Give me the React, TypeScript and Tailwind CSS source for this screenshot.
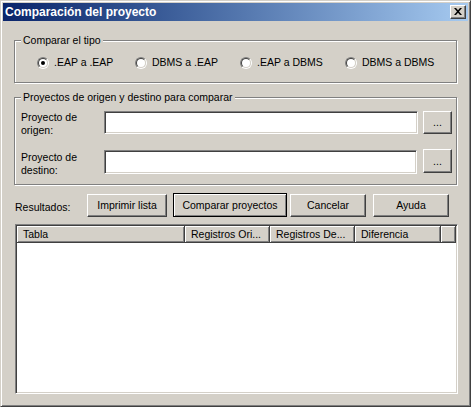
import React from "react";

function Radio({ checked }: { checked?: boolean }) {
  return (
    <span className="w-[12px] h-[12px] rounded-full border border-t-[#808080] border-l-[#808080] border-b-white border-r-white flex items-center justify-center shrink-0">
      <span className="w-[10px] h-[10px] rounded-full border border-t-[#404040] border-l-[#404040] border-b-[#d4d0c8] border-r-[#d4d0c8] bg-white flex items-center justify-center">
        {checked && <span className="w-[4px] h-[4px] rounded-full bg-black" />}
      </span>
    </span>
  );
}

function Btn({ children, className }: { children: React.ReactNode; className: string }) {
  return (
    <div
      className={
        "flex items-center justify-center bg-[#d4d0c8] border border-t-white border-l-white border-r-[#404040] border-b-[#404040] shadow-[inset_-1px_-1px_0_#808080] " +
        className
      }
    >
      {children}
    </div>
  );
}

function Field({ className }: { className: string }) {
  return (
    <div
      className={
        "bg-white border border-t-[#808080] border-l-[#808080] border-b-white border-r-white shadow-[inset_1px_1px_0_#404040,inset_-1px_-1px_0_#d4d0c8] " +
        className
      }
    />
  );
}

function HeaderCell({ children, className }: { children?: React.ReactNode; className: string }) {
  return (
    <div
      className={
        "h-full flex items-center pl-[6px] whitespace-nowrap overflow-hidden border-r border-b border-[#404040] shadow-[inset_1px_1px_0_#fff,inset_-1px_-1px_0_#808080] " +
        className
      }
    >
      {children}
    </div>
  );
}

export default function App() {
  return (
    <div className="w-[471px] h-[407px] bg-[#d4d0c8] border border-t-[#d4d0c8] border-l-[#d4d0c8] border-r-[#404040] border-b-[#404040] shadow-[inset_1px_1px_0_#fff,inset_-1px_-1px_0_#808080] p-[2px] flex flex-col text-[10.5px] leading-[13px] text-black font-['Liberation_Sans',Arial,sans-serif]">
      {/* Title bar */}
      <div className="h-[18px] shrink-0 flex items-center justify-between pl-[2px] pr-[2px] bg-linear-to-r from-[#0a246a] to-[#a6caf0]">
        <span className="text-white font-bold text-[12px] leading-[14px]">Comparación del proyecto</span>
        <div className="w-[16px] h-[14px] flex items-center justify-center bg-[#d4d0c8] border border-t-white border-l-white border-r-[#404040] border-b-[#404040] shadow-[inset_-1px_-1px_0_#808080]">
          <svg width="8" height="7" viewBox="0 0 8 7" className="-mt-[1px] -ml-[1px]">
            <path d="M0 0h2l2 2.2L6 0h2L5 3.5 8 7H6L4 4.8 2 7H0l3-3.5z" fill="#000" />
          </svg>
        </div>
      </div>

      {/* Group 1 */}
      <fieldset className="mt-[13px] ml-[11px] w-[443px] h-[49px] shrink-0 border border-[#808080] shadow-[inset_1px_1px_0_#fff,1px_1px_0_#fff]">
        <legend className="ml-[6px] px-[2px] leading-[13px] bg-[#d4d0c8]">Comparar el tipo</legend>
        <div className="pt-[9px] pl-[22px] flex items-center">
          <label className="w-[98px] flex items-center gap-[5px]">
            <Radio checked />
            <span>.EAP a .EAP</span>
          </label>
          <label className="w-[105px] flex items-center gap-[5px]">
            <Radio />
            <span>DBMS a .EAP</span>
          </label>
          <label className="w-[105px] flex items-center gap-[5px]">
            <Radio />
            <span>.EAP a DBMS</span>
          </label>
          <label className="flex items-center gap-[5px]">
            <Radio />
            <span>DBMS a DBMS</span>
          </label>
        </div>
      </fieldset>

      {/* Group 2 */}
      <fieldset className="mt-[8px] ml-[11px] w-[443px] h-[94px] shrink-0 border border-[#808080] shadow-[inset_1px_1px_0_#fff,1px_1px_0_#fff]">
        <legend className="ml-[6px] px-[2px] leading-[13px] bg-[#d4d0c8]">
          Proyectos de origen y destino para comparar
        </legend>
        <div className="pt-[7px] pl-[6px] flex flex-col">
          <div className="flex items-start">
            <div className="w-[83px]">
              Proyecto de
              <br />
              origen:
            </div>
            <Field className="w-[314px] h-[23px]" />
            <Btn className="ml-[5px] w-[29px] h-[23px]">...</Btn>
          </div>
          <div className="mt-[13px] flex items-start">
            <div className="w-[83px] pt-[1px]">
              Proyecto de
              <br />
              destino:
            </div>
            <Field className="w-[313px] h-[24px]" />
            <Btn className="ml-[6px] -mt-[1px] w-[29px] h-[24px]">...</Btn>
          </div>
        </div>
      </fieldset>

      {/* Buttons row */}
      <div className="mt-[8px] h-[24px] shrink-0 flex items-end">
        <div className="ml-[12px] w-[72px] self-center mt-[4px]">Resultados:</div>
        <Btn className="w-[80px] h-[23px]">Imprimir lista</Btn>
        <div className="ml-[6px] w-[114px] h-[24px] flex items-center justify-center border border-black shadow-[inset_1px_1px_0_#fff,inset_-1px_-1px_0_#808080]">
          Comparar proyectos
        </div>
        <Btn className="ml-[3px] w-[76px] h-[23px]">Cancelar</Btn>
        <Btn className="ml-[7px] w-[76px] h-[23px]">Ayuda</Btn>
      </div>

      {/* List */}
      <div className="mt-[7px] ml-[12px] w-[443px] h-[170px] shrink-0 p-[1px] bg-white border border-t-[#808080] border-l-[#808080] border-b-white border-r-white shadow-[inset_1px_1px_0_#404040,inset_-1px_-1px_0_#d4d0c8] flex flex-col">
        <div className="h-[17px] flex bg-[#d4d0c8]">
          <HeaderCell className="w-[168px]">Tabla</HeaderCell>
          <HeaderCell className="w-[85px] pl-[5px]">Registros Ori...</HeaderCell>
          <HeaderCell className="w-[85px] pl-[5px]">Registros De...</HeaderCell>
          <HeaderCell className="w-[86px] pl-[5px]">Diferencia</HeaderCell>
          <HeaderCell className="flex-1" />
        </div>
        <div className="flex-1 bg-white" />
      </div>
    </div>
  );
}
